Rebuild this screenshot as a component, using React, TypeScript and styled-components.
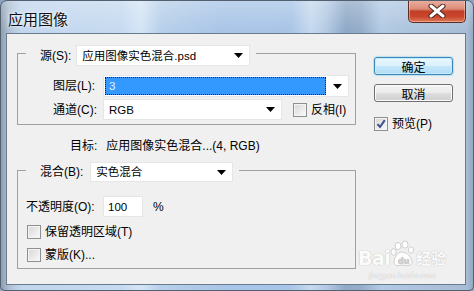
import React from "react";
import styled, { createGlobalStyle, css } from "styled-components";

const UI = `"Liberation Sans", "Noto Sans CJK SC", sans-serif`;

const Global = createGlobalStyle`
  html, body { margin: 0; padding: 0; }
  body {
    width: 474px; height: 291px; overflow: hidden;
    font-family: ${UI};
    background: #8ea4be;
  }
`;

const Window = styled.div`
  position: relative;
  box-sizing: border-box;
  width: 474px;
  height: 291px;
  display: flex;
  flex-direction: column;
  border: 1px solid #52606f;
  border-radius: 7px 7px 5px 5px;
  overflow: hidden;
  background:
    linear-gradient(180deg, rgba(255,255,255,0.25) 0px, rgba(255,255,255,0) 30px),
    linear-gradient(90deg, #8f9fb2 0px, #aebfd2 8px, #c1d6ee 20px, #c6daf0 120px, #d5e5f5 140px,
      #b7cfea 160px, #a9c5e7 220px, #a8c4e6 290px, #c6d9ee 310px, #b4cbe4 325px, #8ea8c7 345px,
      #95adca 360px, #b3cae4 380px, #aec5df 405px, #a7bdd6 466px, #8ca1ba 474px);
`;

const TitleBar = styled.div`
  height: 32px;
  flex: none;
  display: flex;
  justify-content: space-between;
  align-items: flex-start;
`;

const Title = styled.div`
  margin: 9px 0 0 7px;
  font-family: "Noto Sans CJK SC", sans-serif;
  font-size: 15px;
  line-height: 17px;
  color: #111;
  text-shadow: 0 0 6px rgba(255,255,255,0.9), 0 0 3px rgba(255,255,255,0.9);
`;

const CloseButton = styled.div`
  box-sizing: border-box;
  width: 58px;
  height: 23px;
  margin: -1px 7px 0 0;
  border: 1px solid #5e2a24;
  border-top: none;
  border-radius: 0 0 5px 5px;
  display: flex;
  align-items: center;
  justify-content: center;
  background: linear-gradient(180deg, #e9b1a3 0%, #dc8d79 40%, #c23f27 52%, #c9452c 75%, #dd7a58 100%);
  box-shadow: inset 0 0 0 1px rgba(255, 220, 200, 0.45);
`;

const Client = styled.div`
  box-sizing: border-box;
  height: 252px;
  margin: 0 7px 5px 5px;
  border: 1px solid #6a7b8e;
  background: #f0f0f0;
  display: flex;
  padding: 19px 0 0 10px;
  color: #000;
  font-size: 12px;
`;

const LeftCol = styled.div`
  width: 339px;
  display: flex;
  flex-direction: column;
`;

const GroupBox = styled.div<{ $pb: number }>`
  border: 1px solid #a0a0a0;
  display: flex;
  flex-direction: column;
  padding-bottom: ${(p) => p.$pb}px;
`;

const GroupHeader = styled.div<{ $gap: number }>`
  align-self: flex-start;
  margin: -9px 0 0 8px;
  padding: 0 6px 0 14px;
  background: #f0f0f0;
  display: flex;
  align-items: center;
  gap: ${(p) => p.$gap}px;
`;

const Text = styled.span`
  font-size: 12px;
  line-height: 14px;
  white-space: nowrap;
`;

const ValueText = styled.span`
  font-size: 11.5px;
  line-height: 14px;
  white-space: nowrap;
`;

const Row = styled.div<{ $mt: number; $pl: number; $h: number }>`
  display: flex;
  align-items: center;
  height: ${(p) => p.$h}px;
  margin-top: ${(p) => p.$mt}px;
  padding-left: ${(p) => p.$pl}px;
`;

const FieldLabel = styled(Text)<{ $w: number }>`
  width: ${(p) => p.$w}px;
  flex: none;
`;

const Combo = styled.div<{ $w: number; $h: number }>`
  box-sizing: border-box;
  width: ${(p) => p.$w}px;
  height: ${(p) => p.$h}px;
  flex: none;
  display: flex;
  background: #fff;
  border: 1px solid #e6e6e6;
`;

const ComboField = styled.div<{ $selected?: boolean }>`
  flex: 1;
  margin: 1px;
  padding-left: 4px;
  display: flex;
  align-items: center;
  ${(p) =>
    p.$selected &&
    css`
      background: #3399ff;
      color: #e6f3ff;
      outline: 1px dotted #1b1b1b;
      outline-offset: -1px;
    `}
`;

const ArrowBox = styled.div`
  width: 21px;
  flex: none;
  display: flex;
  align-items: center;
  justify-content: center;
`;

const Input = styled.div`
  box-sizing: border-box;
  width: 40px;
  height: 21px;
  background: #fff;
  border: 1px solid #e6e6e6;
  display: flex;
  align-items: center;
  padding-left: 4px;
  flex: none;
`;

const CheckBox = styled.div`
  box-sizing: border-box;
  width: 14px;
  height: 14px;
  flex: none;
  border: 1px solid #8f8f8f;
  background: linear-gradient(135deg, #d6d6d6 0%, #ececec 60%, #fbfbfb 100%);
  box-shadow: inset 0 0 0 1px #f4f4f4;
  display: flex;
  align-items: center;
  justify-content: center;
`;

const CheckRow = styled.label<{ $gap: number }>`
  display: flex;
  align-items: center;
  gap: ${(p) => p.$gap}px;
`;

const TargetLine = styled.div`
  height: 45px;
  box-sizing: border-box;
  padding: 0 0 3px 53px;
  display: flex;
  align-items: center;
  gap: 9px;
`;

const RightCol = styled.div`
  width: 79px;
  margin-left: 18px;
  padding-top: 4px;
  display: flex;
  flex-direction: column;
`;

const Button = styled.div<{ $default?: boolean; $mt: number }>`
  box-sizing: border-box;
  height: 18px;
  margin-top: ${(p) => p.$mt}px;
  border-radius: 3px;
  display: flex;
  align-items: center;
  justify-content: center;
  font-family: "Noto Sans CJK SC", sans-serif;
  font-size: 12px;
  ${(p) =>
    p.$default
      ? css`
          border: 1px solid #3d86b8;
          background: linear-gradient(180deg, #eaf7fd 0%, #dcf1fc 48%, #c3e7fb 52%, #b1dcf4 100%);
          box-shadow: inset 0 0 0 1px #c5ecfd, 0 0 1px 1px rgba(110, 200, 240, 0.4);
        `
      : css`
          border: 1px solid #707070;
          background: linear-gradient(180deg, #f4f4f4 0%, #ebebeb 48%, #dddddd 52%, #cfcfcf 100%);
          box-shadow: inset 0 0 0 1px #fbfbfb;
        `}
`;

const Watermark = styled.div`
  position: absolute;
  left: 357px;
  top: 237px;
  display: flex;
  flex-direction: column;
  align-items: center;
  color: rgba(255, 255, 255, 0.95);
  text-shadow: 0 0 1px #c4c4c4, 0 0 1px #c4c4c4;
  pointer-events: none;
`;

const WmTop = styled.div`
  display: flex;
  align-items: flex-end;
  height: 30px;
`;

const WmBai = styled.span`
  font-family: "DejaVu Sans", sans-serif;
  font-weight: bold;
  font-size: 19px;
  line-height: 20px;
  letter-spacing: -0.5px;
`;

const WmJy = styled.span`
  font-family: "Noto Sans CJK SC", sans-serif;
  font-weight: bold;
  font-size: 15px;
  line-height: 20px;
`;

const WmUrl = styled.span`
  font-family: "Liberation Serif", serif;
  font-size: 9px;
  line-height: 12px;
  margin-top: 1px;
`;

const Arrow = () => (
  <svg width="9" height="5" viewBox="0 0 9 5">
    <polygon points="0,0 9,0 4.5,5" fill="#000" />
  </svg>
);

const Check = () => (
  <svg width="10" height="10" viewBox="0 0 10 10">
    <path d="M1.5 5.2 L4 8 L8.8 1.2" fill="none" stroke="#3f4f8c" strokeWidth="2" />
  </svg>
);

const Paw = () => (
  <svg width="26" height="28" viewBox="0 0 26 28">
    <g fill="#fff" stroke="#c4c4c4" strokeWidth="0.8">
      <ellipse cx="8" cy="6" rx="3" ry="3.6" />
      <ellipse cx="15" cy="4.5" rx="3" ry="3.6" />
      <ellipse cx="3.5" cy="12" rx="2.6" ry="3.2" />
      <ellipse cx="21" cy="10" rx="2.6" ry="3.2" />
      <path d="M12 12 C7 12 4 19 4 22 C4 26 8 26 12.5 25 C17 26 22 26 22 22 C22 18 17 12 12 12 Z" />
    </g>
    <text x="8" y="24" fontSize="8" fontWeight="bold" fill="#cfcfcf" fontFamily="DejaVu Sans, sans-serif">du</text>
  </svg>
);

export default function App() {
  return (
    <>
      <Global />
      <Window>
        <TitleBar>
          <Title>应用图像</Title>
          <CloseButton>
            <svg width="18" height="14" viewBox="0 0 18 14">
              <path d="M3 2 L15 12 M15 2 L3 12" stroke="#4b2420" strokeWidth="5" strokeLinecap="round" />
              <path d="M3 2 L15 12 M15 2 L3 12" stroke="#ffffff" strokeWidth="3" strokeLinecap="round" />
            </svg>
          </CloseButton>
        </TitleBar>
        <Client>
          <LeftCol>
            <GroupBox $pb={4}>
              <GroupHeader $gap={5}>
                <Text>源(S):</Text>
                <Combo $w={174} $h={21}>
                  <ComboField>
                    <ValueText>应用图像实色混合.psd</ValueText>
                  </ComboField>
                  <ArrowBox>
                    <Arrow />
                  </ArrowBox>
                </Combo>
              </GroupHeader>
              <Row $mt={9} $pl={35} $h={22}>
                <FieldLabel $w={50}>图层(L):</FieldLabel>
                <Combo $w={246} $h={22}>
                  <ComboField $selected>
                    <ValueText>3</ValueText>
                  </ComboField>
                  <ArrowBox>
                    <Arrow />
                  </ArrowBox>
                </Combo>
              </Row>
              <Row $mt={2} $pl={35} $h={21}>
                <FieldLabel $w={50}>通道(C):</FieldLabel>
                <Combo $w={179} $h={21}>
                  <ComboField>
                    <ValueText>RGB</ValueText>
                  </ComboField>
                  <ArrowBox>
                    <Arrow />
                  </ArrowBox>
                </Combo>
                <CheckRow $gap={4} style={{ marginLeft: 11 }}>
                  <CheckBox />
                  <Text>反相(I)</Text>
                </CheckRow>
              </Row>
            </GroupBox>
            <TargetLine>
              <Text>目标:</Text>
              <Text>应用图像实色混合...(4, RGB)</Text>
            </TargetLine>
            <GroupBox $pb={6}>
              <GroupHeader $gap={7}>
                <Text>混合(B):</Text>
                <Combo $w={143} $h={20}>
                  <ComboField>
                    <ValueText>实色混合</ValueText>
                  </ComboField>
                  <ArrowBox>
                    <Arrow />
                  </ArrowBox>
                </Combo>
              </GroupHeader>
              <Row $mt={14} $pl={8} $h={21}>
                <FieldLabel $w={77}>不透明度(O):</FieldLabel>
                <Input>
                  <ValueText>100</ValueText>
                </Input>
                <Text style={{ marginLeft: 10 }}>%</Text>
              </Row>
              <Row $mt={7} $pl={9} $h={15}>
                <CheckRow $gap={4}>
                  <CheckBox />
                  <Text>保留透明区域(T)</Text>
                </CheckRow>
              </Row>
              <Row $mt={8} $pl={9} $h={15}>
                <CheckRow $gap={4}>
                  <CheckBox />
                  <Text>蒙版(K)...</Text>
                </CheckRow>
              </Row>
            </GroupBox>
          </LeftCol>
          <RightCol>
            <Button $default $mt={0}>确定</Button>
            <Button $mt={9}>取消</Button>
            <CheckRow $gap={4} style={{ marginTop: 15 }}>
              <CheckBox>
                <Check />
              </CheckBox>
              <Text>预览(P)</Text>
            </CheckRow>
          </RightCol>
        </Client>
        <Watermark>
          <WmTop>
            <WmBai>Bai</WmBai>
            <Paw />
            <WmJy>经验</WmJy>
          </WmTop>
          <WmUrl>jingyan.baidu.com</WmUrl>
        </Watermark>
      </Window>
    </>
  );
}
